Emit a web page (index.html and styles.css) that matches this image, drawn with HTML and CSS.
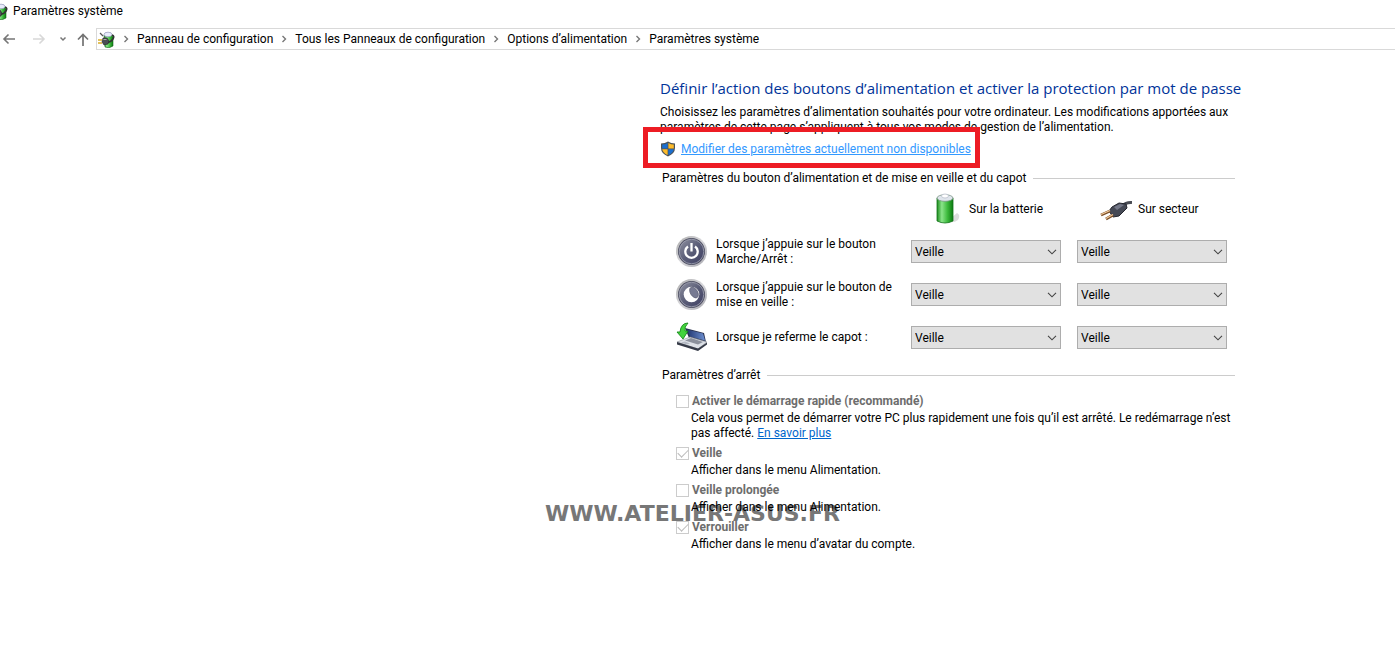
FILE: index.html
```html
<!DOCTYPE html>
<html lang="fr">
<head>
<meta charset="utf-8">
<meta name="viewport" content="width=device-width, initial-scale=1">
<title>Paramètres système</title>
<link rel="stylesheet" href="styles.css">
</head>
<body>
<svg class="defs" aria-hidden="true">
  <defs>
    <linearGradient id="green" x1="0" x2="1"><stop offset="0" stop-color="#1d8c1d"/><stop offset=".3" stop-color="#8be58a"/><stop offset=".65" stop-color="#3dba3d"/><stop offset="1" stop-color="#0c7a10"/></linearGradient>
    <linearGradient id="metal" x1="0" x2="1" y2="1"><stop offset="0" stop-color="#8f91a0"/><stop offset=".5" stop-color="#5b5e78"/><stop offset="1" stop-color="#3d3e62"/></linearGradient>
    <linearGradient id="rim" x1="0" x2="1" y2="1"><stop offset="0" stop-color="#aaa"/><stop offset=".5" stop-color="#d8d8dc"/><stop offset="1" stop-color="#a5a5ac"/></linearGradient>
    <linearGradient id="screen" x1="0" x2="1"><stop offset="0" stop-color="#21356f"/><stop offset="1" stop-color="#6c8fd0"/></linearGradient>
    <symbol id="power-plan" viewBox="0 0 17 17">
      <path d="M6 4h8l1 2v9q-4 3-8 1z" fill="url(#green)" stroke="#17651b" stroke-width=".6"/>
      <ellipse cx="10" cy="3.500" rx="4" ry="2.300" fill="#e8ebfa" stroke="#8187ad" stroke-width=".6"/>
      <path d="M2 2l3 3" stroke="#555" stroke-width="1.200"/>
      <path d="M14 4q3 1 1 4t-5 3" fill="none" stroke="#333" stroke-width="1.500"/>
      <path d="M5 7l4 0 2 3-1 3-4 1-2-3z" fill="#4b4d53" stroke="#222" stroke-width=".6"/>
      <path d="M0 9h4M0 12h4" stroke="#d9ad29" stroke-width="1.500"/>
      <path d="M5.500 8.500h3" stroke="#aaa"/>
    </symbol>
    <symbol id="sep" viewBox="0 0 6 8"><path d="M1.500 1l3 3-3 3" fill="none" stroke="#777" stroke-width="1.400"/></symbol>
    <symbol id="chevron" viewBox="0 0 10 6"><path d="M1 .8l4 4 4-4" fill="none" stroke="#444" stroke-width="1.100"/></symbol>
    <symbol id="round" viewBox="0 0 32 32">
      <circle cx="15.500" cy="15.500" r="15.500" fill="url(#rim)"/>
      <circle cx="15.500" cy="15.500" r="13.500" fill="#4b4c60"/>
      <circle cx="15.500" cy="15.500" r="12.300" fill="url(#metal)" stroke="#a6a8b8" stroke-width=".8"/>
    </symbol>
  </defs>
</svg>

<header>
  <div class="titlebar">
    <svg class="app-icon" aria-hidden="true"><use href="#power-plan"/></svg>
    <span>Paramètres système</span>
  </div>
  <div class="navbar">
    <div class="nav-buttons">
      <button class="nav-button" aria-label="Précédent"><svg width="14" height="12" viewBox="0 0 14 12"><path d="M13 6H2M6.500 1.500L2 6l4.500 4.500" fill="none" stroke="#767676" stroke-width="1.600"/></svg></button>
      <button class="nav-button" aria-label="Suivant" disabled><svg width="14" height="12" viewBox="0 0 14 12"><path d="M1 6h11M7.500 1.500L12 6l-4.500 4.500" fill="none" stroke="#d8d8d8" stroke-width="1.600"/></svg></button>
      <button class="nav-button" aria-label="Emplacements récents"><svg width="8" height="6" viewBox="0 0 8 6"><path d="M1.500 1.500L4 4l2.500-2.500" fill="none" stroke="#777" stroke-width="1.500"/></svg></button>
      <button class="nav-button" aria-label="Monter"><svg width="12" height="13" viewBox="0 0 12 13"><path d="M6 13V2M1 6.500l5-5 5 5" fill="none" stroke="#737373" stroke-width="1.700"/></svg></button>
    </div>
    <nav class="address" aria-label="Adresse">
      <svg class="address-icon" aria-hidden="true"><use href="#power-plan"/></svg>
      <svg class="sep" aria-hidden="true"><use href="#sep"/></svg>
      <a class="crumb" href="#">Panneau de configuration</a>
      <svg class="sep" aria-hidden="true"><use href="#sep"/></svg>
      <a class="crumb" href="#">Tous les Panneaux de configuration</a>
      <svg class="sep" aria-hidden="true"><use href="#sep"/></svg>
      <a class="crumb" href="#">Options d’alimentation</a>
      <svg class="sep" aria-hidden="true"><use href="#sep"/></svg>
      <a class="crumb" href="#">Paramètres système</a>
    </nav>
  </div>
</header>

<main>
  <h1>Définir l’action des boutons d’alimentation et activer la protection par mot de passe</h1>
  <p class="intro">Choisissez les paramètres d’alimentation souhaités pour votre ordinateur. Les modifications apportées aux <br>paramètres de cette page s’appliquent à tous vos modes de gestion de l’alimentation.</p>
  <div class="unlock">
    <svg width="16" height="16" viewBox="0 0 16 16" aria-hidden="true">
      <path d="M8 .5Q5 2.500 1 2.500V7q0 5.500 7 8.500 7-3 7-8.500V2.500Q11 2.500 8 .5z" fill="#4c5358"/>
      <path d="M7.600 2Q5 3.500 2.200 3.500V7.500H7.600z" fill="#1a6fd0"/>
      <path d="M8.400 2Q11 3.500 13.800 3.500V7.500H8.400z" fill="#fdbb2b"/>
      <path d="M2.200 8.200H7.600V14Q3 12 2.200 8.200z" fill="#fdbb2b"/>
      <path d="M13.800 8.200H8.400V14Q13 12 13.800 8.200z" fill="#1a6fd0"/>
    </svg>
    <a class="unlock-link" href="#">Modifier des paramètres actuellement non disponibles</a>
    <span class="highlight"></span>
  </div>

  <section>
    <h2>Paramètres du bouton d’alimentation et de mise en veille et du capot</h2>
    <div class="row sources">
      <span></span>
      <div class="source battery">
        <svg width="32" height="32" viewBox="0 0 32 32" aria-hidden="true">
          <path d="M18 26l7-6q4 2 1 7-4 3-9 2z" fill="#ddd"/>
          <path d="M5 5v23q8 4 16 0V5z" fill="url(#green)" stroke="#13741a" stroke-width=".8"/>
          <ellipse cx="13" cy="5" rx="8" ry="3.300" fill="#dfe5ec" stroke="#7f978a" stroke-width=".8"/>
          <ellipse cx="13" cy="3" rx="3.500" ry="2" fill="#fff" stroke="#b0b8c6" stroke-width=".7"/>
        </svg>
        <span>Sur la batterie</span>
      </div>
      <div class="source mains">
        <svg width="32" height="32" viewBox="0 0 32 32" aria-hidden="true">
          <path d="M22 13q4-4 10-3.500" fill="none" stroke="#4a4d55" stroke-width="3"/>
          <path d="M12 14l7-4 7 1 1 4-8 8-6 1-4-6z" fill="#454955" stroke="#24262e"/>
          <path d="M14 14l6-3 4 1-7 5z" fill="#747888"/>
          <path d="M10 18l-9 4M13 22l-7 4" stroke="#7b4f28" stroke-width="3"/>
          <path d="M10 17.500l-9 4M13 21.500l-7 4" stroke="#f1c99c" stroke-width="1.300"/>
        </svg>
        <span>Sur secteur</span>
      </div>
    </div>

    <div class="row">
      <div class="action">
        <svg width="32" height="32" viewBox="0 0 32 32" aria-hidden="true"><use href="#round"/><path d="M12 10.500a6.200 6.200 0 1 0 7 0M15.500 7v8.500" fill="none" stroke="#fff" stroke-width="2.300"/></svg>
        <span>Lorsque j’appuie sur le bouton<br>Marche/Arrêt :</span>
      </div>
      <div class="combo"><select aria-label="Bouton Marche/Arrêt, sur la batterie"><option>Veille</option></select><svg class="chevron"><use href="#chevron"/></svg></div>
      <div class="combo"><select aria-label="Bouton Marche/Arrêt, sur secteur"><option>Veille</option></select><svg class="chevron"><use href="#chevron"/></svg></div>
    </div>
    <div class="row">
      <div class="action">
        <svg width="32" height="32" viewBox="0 0 32 32" aria-hidden="true"><use href="#round"/><circle cx="15.500" cy="15.500" r="7.800" fill="#fff"/><ellipse cx="18" cy="13.500" rx="3.600" ry="6" fill="#777a92" stroke="#55576d" stroke-width=".6" transform="rotate(-32 18 13.500)"/></svg>
        <span>Lorsque j’appuie sur le bouton de<br>mise en veille :</span>
      </div>
      <div class="combo"><select aria-label="Bouton de mise en veille, sur la batterie"><option>Veille</option></select><svg class="chevron"><use href="#chevron"/></svg></div>
      <div class="combo"><select aria-label="Bouton de mise en veille, sur secteur"><option>Veille</option></select><svg class="chevron"><use href="#chevron"/></svg></div>
    </div>
    <div class="row">
      <div class="action">
        <svg width="32" height="32" viewBox="0 1 32 32" aria-hidden="true">
          <path d="M9 7l19 5 2 9-17-4z" fill="#28304e"/>
          <path d="M11 8.500l16 4 2 7-15-4z" fill="url(#screen)"/>
          <path d="M1 21l13-5 17 5-9 7z" fill="#dde1e7" stroke="#8c9099" stroke-width=".6"/>
          <path d="M9 19.500l6-2.500 12 4-5 2.500z" fill="#8b909c"/>
          <path d="M1 21l21 6.500 9-6v2l-9 6.500-21-6.500z" fill="#363b48"/>
          <path d="M5 21.500l4-1 5 2-3 1z" fill="#b4b9c3"/>
          <path d="M12 2Q5 2 4 11H1l6 7 5-8H9q-1-4 3-8z" fill="#42d33c" stroke="#158a1a" stroke-width=".9"/>
        </svg>
        <span>Lorsque je referme le capot :</span>
      </div>
      <div class="combo"><select aria-label="Capot refermé, sur la batterie"><option>Veille</option></select><svg class="chevron"><use href="#chevron"/></svg></div>
      <div class="combo"><select aria-label="Capot refermé, sur secteur"><option>Veille</option></select><svg class="chevron"><use href="#chevron"/></svg></div>
    </div>
  </section>

  <section class="shutdown">
    <h2>Paramètres d’arrêt</h2>
    <div class="options">
      <div>
        <label class="option"><input type="checkbox" disabled>Activer le démarrage rapide (recommandé)</label>
        <p class="hint">Cela vous permet de démarrer votre PC plus rapidement une fois qu’il est arrêté. Le redémarrage n’est<br>pas affecté. <a class="more" href="#">En savoir plus</a></p>
      </div>
      <div>
        <label class="option"><input type="checkbox" checked disabled>Veille</label>
        <p class="hint">Afficher dans le menu Alimentation.</p>
      </div>
      <div>
        <label class="option"><input type="checkbox" disabled>Veille prolongée</label>
        <p class="hint">Afficher dans le menu Alimentation.</p>
      </div>
      <div>
        <label class="option"><input type="checkbox" checked disabled>Verrouiller</label>
        <p class="hint">Afficher dans le menu d’avatar du compte.</p>
      </div>
    </div>
    <span class="watermark">WWW.ATELIER-ASUS.FR</span>
  </section>
</main>
</body>
</html>
```
FILE: styles.css
```css
* { box-sizing: border-box; }

body {
  margin: 0;
  background: #fff;
  color: #000;
  font: 12px/15px Roboto, "Open Sans", sans-serif;
}

h1, h2, p { margin: 0; font-weight: 400; }
svg { display: block; flex: none; }
.defs { position: absolute; width: 0; height: 0; }

.titlebar {
  display: flex;
  align-items: center;
  gap: 5px;
  height: 22px;
}
.app-icon { width: 17px; height: 17px; margin-left: -9px; }

.navbar { display: flex; margin-top: 6px; }
.nav-buttons { display: flex; align-items: center; gap: 13px; width: 96px; padding-left: 2px; }
.nav-button {
  display: flex;
  padding: 0;
  border: 0;
  background: none;
}
.nav-button:nth-child(2) { margin-left: 3px; }

.nav-button:nth-child(4) { margin-left: -3px; }

.address {
  display: flex;
  flex: 1;
  align-items: center;
  gap: 8px;
  height: 22px;
  border: 1px solid #d9d9d9;
  border-right: 0;
  padding-left: 1px;
  white-space: nowrap;
}
.address-icon { width: 17px; height: 17px; }
.sep { width: 6px; height: 8px; }
.crumb { color: #000; text-decoration: none; }

main {
  max-width: 1235px;
  padding: 27px 0 24px 660px;
}

h1 {
  color: #003399;
  font: 15px/22px "Open Sans", sans-serif;
  white-space: nowrap;
}
.intro { margin-top: 6px; white-space: nowrap; }

.unlock {
  position: relative;
  display: flex;
  align-items: center;
  gap: 5px;
  height: 20px;
  margin: 4px 0 11px;
  white-space: nowrap;
}
.unlock-link { color: #3399ff; }
.highlight {
  position: absolute;
  inset: -12px auto auto -17px;
  width: 337px;
  height: 41px;
  border: 5px solid #ed1c24;
  pointer-events: none;
}

h2 {
  display: flex;
  align-items: center;
  gap: 7px;
  padding-left: 2px;
  font-size: 12px;
  line-height: 17px;
  white-space: nowrap;
}
h2::after { content: ""; flex: 1; border-top: 1px solid #ccc; }

.row {
  display: grid;
  grid-template-columns: minmax(0, 1fr) 150px 150px;
  column-gap: 16px;
  align-items: center;
  height: 43px;
  padding-right: 8px;
}
.sources { height: 32px; margin: 6px 0 5px; }
.source { display: flex; align-items: center; white-space: nowrap; }
.battery { gap: 5px; padding-left: 21px; }
.mains { gap: 6px; padding-left: 23px; }
.action { display: flex; align-items: center; gap: 8px; padding-left: 16px; white-space: nowrap; }

.combo { display: grid; align-items: center; }
.combo > * { grid-area: 1 / 1; }
.combo select {
  appearance: none;
  width: 100%;
  height: 23px;
  padding: 1px 24px 0 3px;
  border: 1px solid #adadad;
  border-radius: 0;
  background: #e1e1e1;
  color: #000;
  font: inherit;
}
.chevron { width: 10px; height: 6px; margin-right: 4px; justify-self: end; pointer-events: none; }

.shutdown { position: relative; margin-top: 8px; }
.options { display: grid; gap: 4px; padding: 9px 0 0 16px; }
.option {
  display: flex;
  align-items: center;
  gap: 3px;
  height: 17px;
  color: #6d6d6d;
  font-weight: 700;
}
.option input {
  appearance: none;
  display: grid;
  place-items: center;
  width: 13px;
  height: 13px;
  margin: 0;
  border: 1px solid #ccc;
  background: #fff;
}
.option input:checked::after {
  content: "";
  width: 9px;
  height: 5px;
  margin-top: -3px;
  border: solid #bbb;
  border-width: 0 0 1px 1px;
  transform: rotate(-45deg);
}
.hint { padding: 1px 0 0 15px; white-space: nowrap; }
.more { color: #0066cc; }

.watermark {
  position: absolute;
  z-index: -1;
  top: 135px;
  left: -115px;
  color: #777;
  font: 700 22px/24px "DejaVu Sans", sans-serif;
  white-space: nowrap;
}
```
